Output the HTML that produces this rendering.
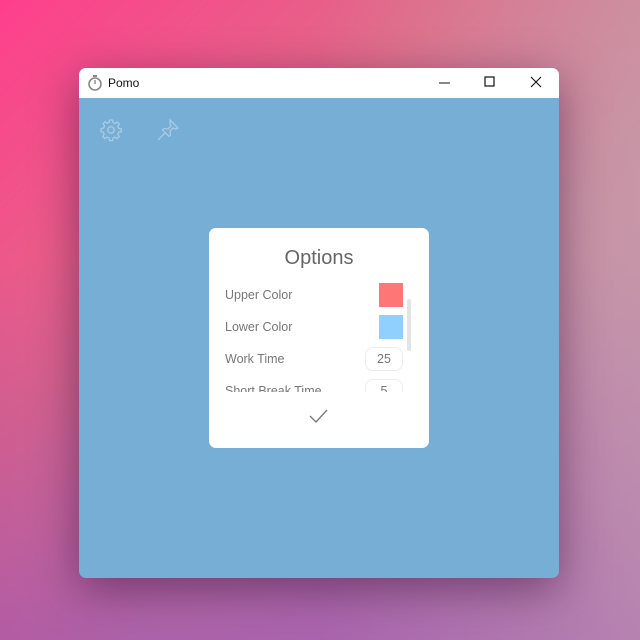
<!DOCTYPE html>
<html><head><style>
body{margin:0;width:640px;height:640px;overflow:hidden;position:relative;font-family:"Liberation Sans",sans-serif;
background:linear-gradient(135deg,#ff3f8c 0%,#e06a88 35%,#c98aa0 60%,#b890b8 100%);}
.ov{position:absolute;inset:0;background:linear-gradient(to bottom,rgba(0,0,0,0) 40%,rgba(140,50,180,0.45) 100%);}
.ov2{position:absolute;inset:0;background:linear-gradient(to right,rgba(0,0,0,0) 50%,rgba(200,160,170,0.5) 100%);}
.win{position:absolute;left:79px;top:68px;width:480px;height:510px;border-radius:7px;overflow:hidden;background:#76aed5;box-shadow:0 12px 45px rgba(60,20,60,0.55);}
.tb{height:30px;background:#fff;position:relative;}
.tb .t{position:absolute;left:29px;top:8px;font-size:12px;color:#111;}
.dlg{position:absolute;left:130px;top:160px;width:220px;height:220px;background:#fff;border-radius:7px;}
.h{position:absolute;top:19px;width:100%;text-align:center;font-size:20px;color:#666;}
.l{position:absolute;left:16px;font-size:12.5px;color:#777;}
.sw{position:absolute;left:170px;width:24px;height:24px;}
.nb{position:absolute;left:156px;width:36px;height:22px;border:1px solid #ececec;border-radius:8px;font-size:12.5px;color:#777;text-align:center;line-height:22px;}
</style></head><body>
<div class="ov"></div><div class="ov2"></div>
<div class="win">
<div class="tb">
<svg style="position:absolute;left:8px;top:6px" width="16" height="18"><rect x="6" y="1" width="4" height="2" fill="#888"/><circle cx="8" cy="10" r="6" fill="none" stroke="#888" stroke-width="1.6"/><line x1="8" y1="10" x2="8" y2="6" stroke="#888" stroke-width="1.4"/></svg>
<div class="t">Pomo</div>
<svg style="position:absolute;left:360px;top:8px" width="12" height="14"><line x1="0" y1="7" x2="11" y2="7" stroke="#111"/></svg>
<svg style="position:absolute;left:405px;top:8px" width="12" height="12"><rect x="1" y="1" width="9" height="9" fill="none" stroke="#111" stroke-width="1.2"/></svg>
<svg style="position:absolute;left:451px;top:8px" width="12" height="12"><path d="M1 1L11 11M11 1L1 11" stroke="#111" stroke-width="1.1"/></svg>
</div>
<svg style="position:absolute;left:20px;top:50px" width="24" height="24" viewBox="0 0 24 24" fill="none" stroke="#a9cbe4" stroke-width="1.3"><circle cx="12" cy="12" r="3.2"/><path d="M10.5 2h3l.5 2.6 2 .9 2.2-1.5 2.1 2.1-1.5 2.2.9 2 2.6.5v3l-2.6.5-.9 2 1.5 2.2-2.1 2.1-2.2-1.5-2 .9-.5 2.6h-3l-.5-2.6-2-.9-2.2 1.5-2.1-2.1 1.5-2.2-.9-2L2 13.5v-3l2.6-.5.9-2L4 5.8 6.1 3.7l2.2 1.5 2-.9z"/></svg>
<svg style="position:absolute;left:77px;top:50px" width="24" height="24" viewBox="0 0 24 24" fill="none" stroke="#a9cbe4" stroke-width="1.3"><path d="M14 2l8 8-2 1-3-1-3 3 .5 4-1.5 1.5L6.5 12 8 10.5l4 .5 3-3-1-3z M9.5 14.5L2 22"/></svg>
<div class="dlg">
<div class="h">Options</div>
<div class="l" style="top:60px">Upper Color</div><div class="sw" style="top:55px;background:#ff7676"></div>
<div class="l" style="top:92px">Lower Color</div><div class="sw" style="top:87px;background:#8fd0ff"></div>
<div class="l" style="top:124px">Work Time</div><div class="nb" style="top:119px">25</div>
<div style="position:absolute;left:0;top:146px;width:220px;height:18px;overflow:hidden">
<div class="l" style="top:10px">Short Break Time</div><div class="nb" style="top:5px">5</div></div>
<div style="position:absolute;left:198px;top:71px;width:4px;height:52px;background:#e4e4e4;border-radius:2px"></div>
<svg style="position:absolute;left:100px;top:180px" width="20" height="16"><path d="M1 8l6 6L18 2" fill="none" stroke="#777" stroke-width="1.3"/></svg>
</div>
</div>
</body></html>
